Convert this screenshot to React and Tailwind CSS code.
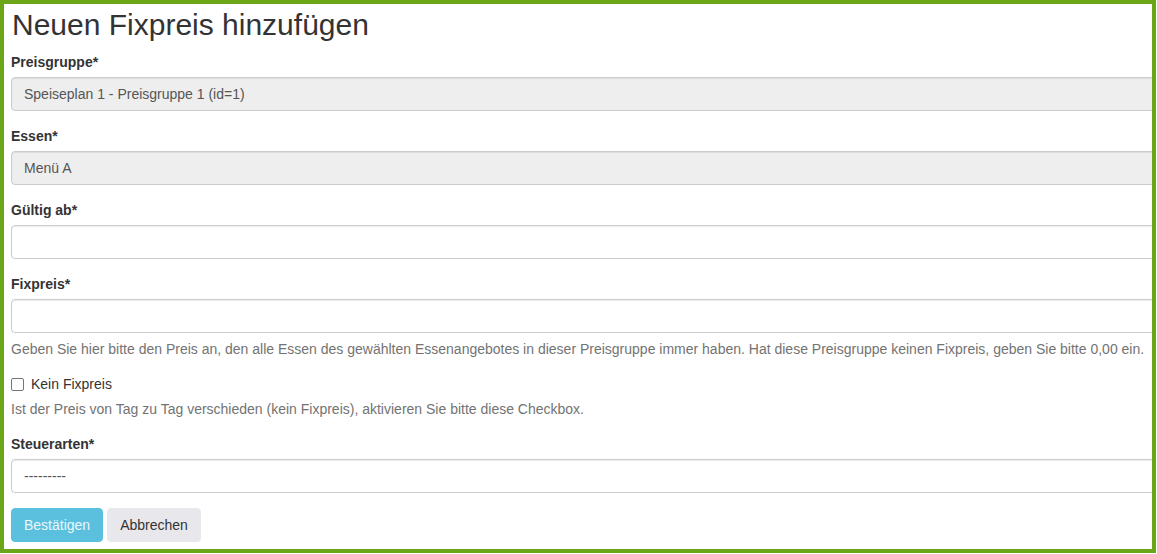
import React from 'react';

const font = { fontFamily: '"Liberation Sans", Arial, sans-serif' };

const Label = ({ children }) => (
  <div className="text-[14px] leading-[20px] font-bold text-[#333] mb-[5px]">{children}</div>
);

const ReadonlySelect = ({ value }) => (
  <div className="w-[1170px] h-[34px] flex items-center px-[12px] bg-[#eeeeee] border border-[#cccccc] rounded-[4px] text-[14px] text-[#555] shadow-[inset_0_1px_1px_rgba(0,0,0,0.075)]">
    {value}
  </div>
);

const TextInput = ({ value = '' }) => (
  <div className="w-[1170px] h-[34px] flex items-center px-[12px] bg-white border border-[#cccccc] rounded-[4px] text-[14px] text-[#555] shadow-[inset_0_1px_1px_rgba(0,0,0,0.075)]">
    {value}
  </div>
);

const Help = ({ children, className = '' }) => (
  <div className={`text-[14px] leading-[20px] text-[#737373] ${className}`}>{children}</div>
);

export default function App() {
  return (
    <div className="bg-white w-[1157px] h-[554px]" style={font}>
      <div className="w-[1156px] h-[553px] border-4 border-[#6aa617] overflow-hidden">
        <div className="pl-[7px]">
          <h2 className="mt-[4px] mb-[11px] pl-[1px] text-[30px] leading-[33px] font-normal text-[#333]">
            Neuen Fixpreis hinzufügen
          </h2>

          {/* Preisgruppe */}
          <div className="mb-[15px]">
            <Label>Preisgruppe*</Label>
            <ReadonlySelect value="Speiseplan 1 - Preisgruppe 1 (id=1)" />
          </div>

          {/* Essen */}
          <div className="mb-[15px]">
            <Label>Essen*</Label>
            <ReadonlySelect value="Menü A" />
          </div>

          {/* Gültig ab */}
          <div className="mb-[15px]">
            <Label>Gültig ab*</Label>
            <TextInput />
          </div>

          {/* Fixpreis */}
          <div className="mb-[15px]">
            <Label>Fixpreis*</Label>
            <TextInput />
            <Help className="mt-[6px]">
              Geben Sie hier bitte den Preis an, den alle Essen des gewählten Essenangebotes in dieser Preisgruppe immer haben. Hat diese Preisgruppe keinen Fixpreis, geben Sie bitte 0,00 ein.
            </Help>
          </div>

          {/* Kein Fixpreis */}
          <div className="mb-[15px]">
            <div className="flex items-center h-[20px] text-[14px] text-[#333]">
              <span className="w-[13px] h-[13px] border border-[#767676] rounded-[2px] bg-white mr-[7px]" />
              <span>Kein Fixpreis</span>
            </div>
            <Help className="mt-[5px]">
              Ist der Preis von Tag zu Tag verschieden (kein Fixpreis), aktivieren Sie bitte diese Checkbox.
            </Help>
          </div>

          {/* Steuerarten */}
          <div className="mb-[15px]">
            <Label>Steuerarten*</Label>
            <TextInput value="---------" />
          </div>

          <div className="flex gap-[4px]">
            <button className="h-[34px] px-[12px] bg-[#5bc0de] border border-[#5bc0de] rounded-[4px] text-[14px] text-[#eaf7fc]">
              Bestätigen
            </button>
            <button className="h-[34px] px-[12px] bg-[#e8e8ec] border border-[#e8e8ec] rounded-[4px] text-[14px] text-[#333]">
              Abbrechen
            </button>
          </div>
        </div>
      </div>
    </div>
  );
}
